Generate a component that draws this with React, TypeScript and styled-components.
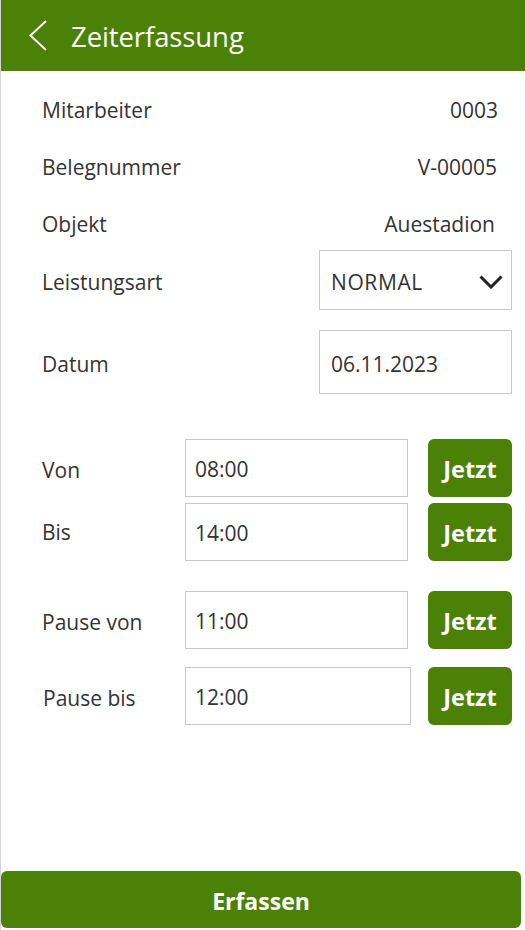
import React from "react";
import styled, { createGlobalStyle } from "styled-components";

const GREEN = "#4a8106";
const FONT = `"Open Sans", "Noto Sans", "Liberation Sans", sans-serif`;

const Global = createGlobalStyle`
  html, body { margin: 0; padding: 0; background: #fff; }
  body { font-family: ${FONT}; color: #333; }
  * { box-sizing: border-box; }
`;

const Page = styled.div`
  width: 526px;
  height: 930px;
  display: flex;
  flex-direction: column;
  border-left: 1px solid #d4d4d4;
  border-right: 1px solid #d4d4d4;
  background: #fff;
`;

const Header = styled.header`
  height: 71px;
  background: ${GREEN};
  display: flex;
  align-items: center;
  padding-left: 28px;
  gap: 24px;
  color: #fff;
`;

const Title = styled.h1`
  margin: 0;
  padding-top: 2px;
  font-size: 27.5px;
  font-weight: 400;
  letter-spacing: -0.1px;
`;

const Content = styled.main`
  padding: 9px 13px 0 41px;
  display: flex;
  flex-direction: column;
`;

const InfoRow = styled.div`
  height: 57px;
  display: flex;
  align-items: center;
  justify-content: space-between;
  padding-right: 14px;
`;

const Label = styled.span<{ $dy?: number; $dx?: number }>`
  font-size: 21px;
  line-height: 1;
  padding-top: ${(p) => 4 + (p.$dy ?? 0)}px;
  padding-left: ${(p) => p.$dx ?? 0}px;
  color: #333;
`;

const Value = styled.span<{ $shift?: number }>`
  font-size: 21px;
  line-height: 1;
  padding-top: 4px;
  color: #333;
  margin-right: ${(p) => p.$shift ?? 0}px;
`;

const FieldRow = styled.div<{ $mt: number }>`
  display: flex;
  align-items: center;
  justify-content: space-between;
  margin-top: ${(p) => p.$mt}px;
`;

const Box = styled.div<{ $h: number }>`
  width: 193px;
  height: ${(p) => p.$h}px;
  border: 1px solid #c8c8c8;
  display: flex;
  align-items: center;
  justify-content: space-between;
  padding: 3px 8px 0 11px;
  font-size: 21px;
  color: #333;
`;

const BoxText = styled.span<{ $spacing?: number }>`
  letter-spacing: ${(p) => p.$spacing ?? 0}px;
`;

const TimeRow = styled.div<{ $mt: number }>`
  display: grid;
  grid-template-columns: 143px 226px 1fr;
  align-items: center;
  height: 58px;
  margin-top: ${(p) => p.$mt}px;
`;

const TimeInput = styled.div<{ $w: number }>`
  width: ${(p) => p.$w}px;
  height: 58px;
  border: 1px solid #c8c8c8;
  display: flex;
  align-items: center;
  padding: 2px 0 0 9px;
  font-size: 21px;
  color: #333;
`;

const JetztButton = styled.button`
  justify-self: end;
  width: 84px;
  height: 58px;
  border: none;
  border-radius: 6px;
  background: ${GREEN};
  color: #fff;
  font-family: ${FONT};
  font-size: 23.5px;
  font-weight: 700;
  padding: 2px 0 0;
`;

const SubmitButton = styled.button`
  margin: auto 4px 2px 0;
  height: 57px;
  border: none;
  border-radius: 6px;
  background: ${GREEN};
  color: #fff;
  font-family: ${FONT};
  font-size: 23px;
  font-weight: 700;
  padding: 2px 0 0;
`;

const Back = () => (
  <svg width="18" height="31" viewBox="0 0 18 31" fill="none">
    <polyline points="17,1 1.5,15.5 17,30" stroke="#fff" strokeWidth="2" />
  </svg>
);

const Chevron = () => (
  <svg width="24" height="14" viewBox="0 0 24 14" fill="none">
    <polyline points="1.5,1.5 12,12 22.5,1.5" stroke="#222" strokeWidth="3" />
  </svg>
);

const times = [
  { label: "Von", value: "08:00", mt: 45, w: 223, dy: 0, dx: 0 },
  { label: "Bis", value: "14:00", mt: 6, w: 223, dy: -4, dx: 0 },
  { label: "Pause von", value: "11:00", mt: 30, w: 223, dy: 0, dx: 0 },
  { label: "Pause bis", value: "12:00", mt: 18, w: 226, dy: 0, dx: 1 },
];

export default function App() {
  return (
    <>
      <Global />
      <Page>
        <Header>
          <Back />
          <Title>Zeiterfassung</Title>
        </Header>
        <Content>
          <InfoRow>
            <Label>Mitarbeiter</Label>
            <Value>0003</Value>
          </InfoRow>
          <InfoRow>
            <Label>Belegnummer</Label>
            <Value $shift={1}>V-00005</Value>
          </InfoRow>
          <InfoRow>
            <Label>Objekt</Label>
            <Value $shift={3}>Auestadion</Value>
          </InfoRow>
          <FieldRow $mt={-1}>
            <Label>Leistungsart</Label>
            <Box $h={60}>
              <BoxText $spacing={0.6}>NORMAL</BoxText>
              <Chevron />
            </Box>
          </FieldRow>
          <FieldRow $mt={20}>
            <Label>Datum</Label>
            <Box $h={64}>
              <BoxText>06.11.2023</BoxText>
            </Box>
          </FieldRow>
          {times.map((t) => (
            <TimeRow key={t.label} $mt={t.mt}>
              <Label $dy={t.dy} $dx={t.dx}>
                {t.label}
              </Label>
              <TimeInput $w={t.w}>{t.value}</TimeInput>
              <JetztButton>Jetzt</JetztButton>
            </TimeRow>
          ))}
        </Content>
        <SubmitButton>Erfassen</SubmitButton>
      </Page>
    </>
  );
}
